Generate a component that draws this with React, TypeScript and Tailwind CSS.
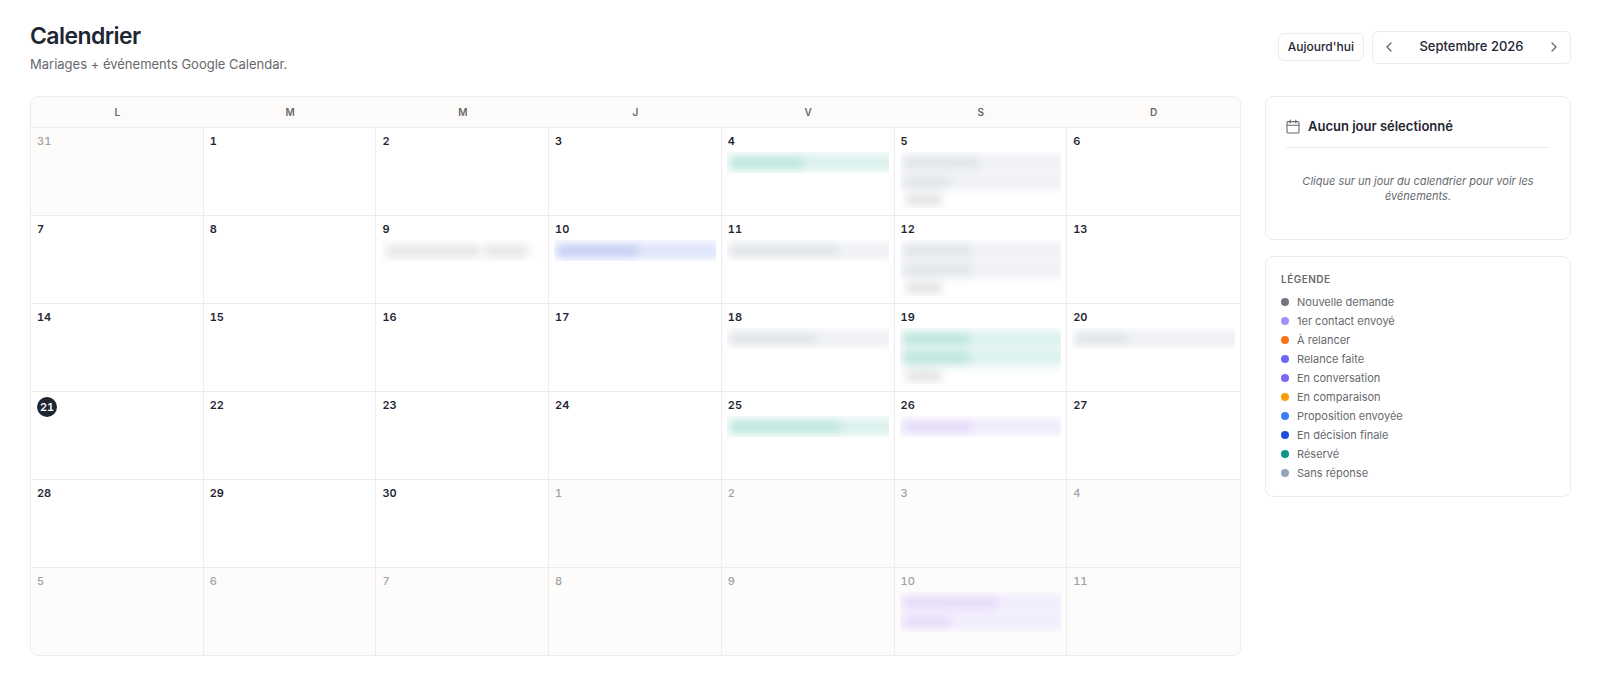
import React, { useState } from 'react';
import { ChevronLeft, ChevronRight } from 'lucide-react';

type Tone = 'green' | 'gray' | 'blue' | 'purple' | 'google';

interface DayEvent {
  tone: Tone;
  words: number[];
}

interface Day {
  label: number;
  outside?: boolean;
  today?: boolean;
  more?: boolean;
  events?: DayEvent[];
}

const weekdays = ['L', 'M', 'M', 'J', 'V', 'S', 'D'];

const weeks: Day[][] = [
  [
    { label: 31, outside: true },
    { label: 1 },
    { label: 2 },
    { label: 3 },
    { label: 4, events: [{ tone: 'green', words: [72] }] },
    { label: 5, more: true, events: [{ tone: 'gray', words: [76] }, { tone: 'gray', words: [46] }] },
    { label: 6 },
  ],
  [
    { label: 7 },
    { label: 8 },
    { label: 9, events: [{ tone: 'google', words: [94, 44] }] },
    { label: 10, events: [{ tone: 'blue', words: [80] }] },
    { label: 11, events: [{ tone: 'gray', words: [108] }] },
    { label: 12, more: true, events: [{ tone: 'gray', words: [68] }, { tone: 'gray', words: [68] }] },
    { label: 13 },
  ],
  [
    { label: 14 },
    { label: 15 },
    { label: 16 },
    { label: 17 },
    { label: 18, events: [{ tone: 'gray', words: [86] }] },
    { label: 19, more: true, events: [{ tone: 'green', words: [66] }, { tone: 'green', words: [66] }] },
    { label: 20, events: [{ tone: 'gray', words: [52] }] },
  ],
  [
    { label: 21, today: true },
    { label: 22 },
    { label: 23 },
    { label: 24 },
    { label: 25, events: [{ tone: 'green', words: [110] }] },
    { label: 26, events: [{ tone: 'purple', words: [68] }] },
    { label: 27 },
  ],
  [
    { label: 28 },
    { label: 29 },
    { label: 30 },
    { label: 1, outside: true },
    { label: 2, outside: true },
    { label: 3, outside: true },
    { label: 4, outside: true },
  ],
  [
    { label: 5, outside: true },
    { label: 6, outside: true },
    { label: 7, outside: true },
    { label: 8, outside: true },
    { label: 9, outside: true },
    { label: 10, outside: true, events: [{ tone: 'purple', words: [94] }, { tone: 'purple', words: [46] }] },
    { label: 11, outside: true },
  ],
];

const legend = [
  { label: 'Nouvelle demande', dot: 'bg-[#71757d]' },
  { label: '1er contact envoyé', dot: 'bg-[#a48efa]' },
  { label: 'À relancer', dot: 'bg-[#f97316]' },
  { label: 'Relance faite', dot: 'bg-[#6f68f6]' },
  { label: 'En conversation', dot: 'bg-[#8063f5]' },
  { label: 'En comparaison', dot: 'bg-[#f59e0b]' },
  { label: 'Proposition envoyée', dot: 'bg-[#437df6]' },
  { label: 'En décision finale', dot: 'bg-[#1d4ed8]' },
  { label: 'Réservé', dot: 'bg-[#0d9488]' },
  { label: 'Sans réponse', dot: 'bg-[#94a3b8]' },
];

const barTone: Record<Tone, string> = {
  green: 'bg-[#dbf1ed]',
  gray: 'bg-[#eff1f5]',
  blue: 'bg-[#dfe5fa]',
  purple: 'bg-[#f1ecfd]',
  google: 'border border-dashed border-[#ececec]',
};

const textTone: Record<Tone, string> = {
  green: 'bg-[#bfe6df]',
  gray: 'bg-[#e1e5ea]',
  blue: 'bg-[#c6d0f4]',
  purple: 'bg-[#e5dcf9]',
  google: 'bg-[#e6e6e6]',
};

function EventList({ events, more }: { events: DayEvent[]; more?: boolean }) {
  return (
    <div className="-mx-px mt-[3px] overflow-hidden py-[2px]">
      <div className="-mr-1 flex flex-col gap-[2px] blur-[4px]">
        {events.map((event, i) => (
          <div key={i} className={`flex h-[17px] items-center gap-1 rounded-sm px-1 ${barTone[event.tone]}`}>
            {event.words.map((width, j) => (
              <span key={j} className={`h-3 rounded-sm ${textTone[event.tone]}`} style={{ width }} />
            ))}
          </div>
        ))}
        {more && (
          <div className="flex h-3.5 items-end px-1.5">
            <span className="h-3 w-9 rounded-sm bg-[#e4e4e4]" />
          </div>
        )}
      </div>
    </div>
  );
}

function DayCell({ day }: { day: Day }) {
  return (
    <td
      className={`h-[88px] border-r border-b border-[#ececec] px-1.5 pt-[5px] pb-1 align-top last:border-r-0 group-last:h-[87px] group-last:border-b-0 ${
        day.outside ? 'bg-[#fdfcfa]' : 'bg-white'
      }`}
    >
      {day.today ? (
        <span className="flex size-5 items-center justify-center rounded-full bg-[#1f2633] text-[11px] font-semibold tabular-nums text-white">
          {day.label}
        </span>
      ) : (
        <span
          className={`block text-[11px] leading-4 tabular-nums ${
            day.outside ? 'font-medium text-[#a0a1a3]' : 'font-semibold text-[#1f2633]'
          }`}
        >
          {day.label}
        </span>
      )}
      {day.events && <EventList events={day.events} more={day.more} />}
    </td>
  );
}

function MonthGrid() {
  return (
    <div className="min-w-0 flex-1 overflow-hidden rounded-lg border border-[#ececec]">
      <table className="w-full table-fixed border-separate border-spacing-0">
        <thead>
          <tr>
            {weekdays.map((day, i) => (
              <th
                key={i}
                scope="col"
                className="h-[31px] border-b border-[#ececec] bg-[#fcfbf9] p-0 text-[10px] font-semibold text-[#66696e]"
              >
                {day}
              </th>
            ))}
          </tr>
        </thead>
        <tbody>
          {weeks.map((week, i) => (
            <tr key={i} className="group">
              {week.map((day) => (
                <DayCell key={day.label} day={day} />
              ))}
            </tr>
          ))}
        </tbody>
      </table>
    </div>
  );
}

function CalendarIcon() {
  return (
    <svg
      width="14"
      height="15"
      viewBox="0 0 14 15"
      fill="none"
      stroke="currentColor"
      strokeWidth="1.1"
      strokeLinecap="round"
      className="shrink-0 text-[#66696e]"
      aria-hidden="true"
    >
      <rect x="1" y="2.6" width="12" height="11.4" rx="1.3" />
      <path d="M1 6.3h12M4.2 1v3M9.8 1v3" />
    </svg>
  );
}

function SelectedDay() {
  return (
    <section className="rounded-lg border border-[#ececec] bg-white p-5">
      <div className="flex items-center gap-2 border-b border-[#ececec] pb-3">
        <CalendarIcon />
        <h2 className="text-[13px] leading-[18px] font-semibold">Aucun jour sélectionné</h2>
      </div>
      <p className="px-3 pt-[26px] pb-[15px] text-center text-[11px] leading-[15px] text-[#66696e] italic">
        Clique sur un jour du calendrier pour voir les événements.
      </p>
    </section>
  );
}

function Legend() {
  return (
    <section className="rounded-lg border border-[#ececec] bg-white px-[15px] pt-4 pb-[15px]">
      <h3 className="mb-2 text-[10px] leading-[13px] font-semibold tracking-wider text-[#66696e] uppercase">Légende</h3>
      <ul className="space-y-[3px]">
        {legend.map((item) => (
          <li key={item.label} className="flex items-center gap-2 text-[11px] leading-4 text-[#66696e]">
            <span className={`size-2 rounded-full ${item.dot}`} />
            {item.label}
          </li>
        ))}
      </ul>
    </section>
  );
}

export default function App() {
  const [month] = useState('Septembre 2026');

  return (
    <main className="bg-white pt-5 pr-[29px] pb-5 pl-[30px] font-['Inter',sans-serif] text-[#1f2633]">
      <header className="mb-[22px] flex items-center justify-between">
        <div>
          <h1 className="text-[23px] leading-8 font-semibold tracking-tight">Calendrier</h1>
          <p className="mt-0.5 text-[13px] leading-5 text-[#66696e]">Mariages + événements Google Calendar.</p>
        </div>
        <div className="flex items-center gap-2">
          <button type="button" className="h-7 rounded-md border border-[#ececec] px-[9px] text-xs font-medium">
            Aujourd'hui
          </button>
          <div className="flex h-[33px] w-[199px] items-center justify-between rounded-md border border-[#ececec] px-2">
            <button type="button" aria-label="Mois précédent" className="text-[#66696e]">
              <ChevronLeft className="size-4" />
            </button>
            <span className="text-[13px] font-medium">{month}</span>
            <button type="button" aria-label="Mois suivant" className="text-[#66696e]">
              <ChevronRight className="size-4" />
            </button>
          </div>
        </div>
      </header>

      <div className="flex items-start gap-6">
        <MonthGrid />
        <aside className="w-[306px] shrink-0 space-y-4">
          <SelectedDay />
          <Legend />
        </aside>
      </div>
    </main>
  );
}
